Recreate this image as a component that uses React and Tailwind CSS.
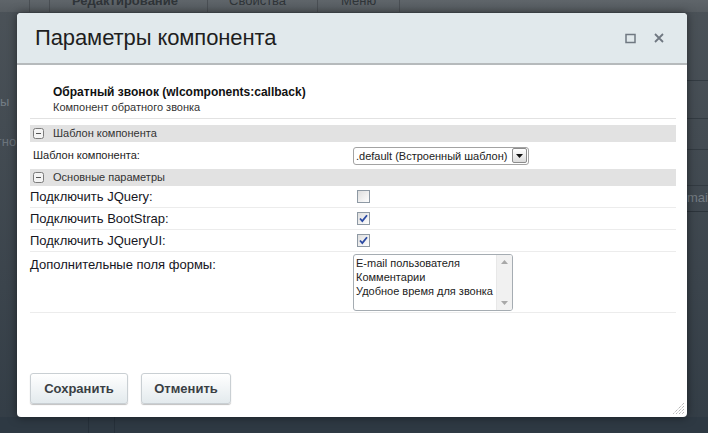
import React from "react";

const font = { fontFamily: '"Liberation Sans", Arial, sans-serif' };

function MinusBox() {
  return (
    <svg width="11" height="11" viewBox="0 0 11 11" className="shrink-0">
      <rect x="0.5" y="0.5" width="10" height="10" rx="2" fill="#f4f4f4" stroke="#7c7c7c" />
      <line x1="3" y1="5.5" x2="8" y2="5.5" stroke="#555" strokeWidth="1" />
    </svg>
  );
}

function Check({ checked }) {
  return (
    <svg width="13" height="13" viewBox="0 0 13 13" className="shrink-0">
      <defs>
        <linearGradient id="cbg" x1="0" y1="0" x2="1" y2="1">
          <stop offset="0" stopColor="#dcdcdc" />
          <stop offset="1" stopColor="#ffffff" />
        </linearGradient>
      </defs>
      <rect x="0.5" y="0.5" width="12" height="12" fill="url(#cbg)" stroke="#8e99a4" />
      {checked && (
        <path d="M3 6.5 L5.3 9 L10 3.2" fill="none" stroke="#2b4aa3" strokeWidth="1.8" />
      )}
    </svg>
  );
}

function Row({ label, children }) {
  return (
    <div className="h-[22px] flex items-center border-b border-[#ececec]">
      <div className="w-[327px] text-[13px] text-[#16161e] leading-[15px]">{label}</div>
      {children}
    </div>
  );
}

function Band({ children }) {
  return (
    <div className="h-[17px] bg-[#e2e2e2] flex items-center pl-[3px]">
      <MinusBox />
      <span className="ml-[9px] text-[11px] text-[#333] leading-[13px]">{children}</span>
    </div>
  );
}

export default function App() {
  return (
    <div
      className="relative w-[708px] h-[433px] overflow-hidden bg-gradient-to-b from-[#4b5258] to-[#333d46]"
      style={font}
    >
      {/* background page */}
      <div className="h-[12px] bg-gradient-to-b from-[#5f656a] to-[#565c61] flex text-[13px] font-bold text-[#2f3438] leading-[14px] overflow-hidden">
        <div className="w-[30px] border-r border-[#4a4f54]" />
        <div className="w-[20px] border-r border-[#4a4f54]" />
        <div className="w-[158px] border-r border-[#4a4f54] pl-[22px] -mt-[6px]">Редактирование</div>
        <div className="w-[110px] border-r border-[#4a4f54] pl-[21px] -mt-[6px] font-normal">Свойства</div>
        <div className="w-[82px] border-r border-[#4a4f54] pl-[23px] -mt-[6px] font-normal">Меню</div>
      </div>
      <div className="absolute left-0 top-[92px] text-[13px] text-[#747d85]">ы</div>
      <div className="absolute left-[-3px] top-[132px] text-[13px] text-[#6b747c]">гно</div>
      <div className="absolute right-0 top-[80px] w-[22px] flex flex-col">
        <div className="h-[38px] border-t border-[#333b42]" />
        <div className="h-[31px] border-t border-[#333b42]" />
        <div className="h-[36px] border-t border-[#333b42]" />
        <div className="h-[26px] border-t border-[#333b42] text-[13px] text-[#737b82] leading-[24px] pl-[1px]">mair</div>
        <div className="h-[25px] border-t border-[#2c343b]" />
      </div>
      <div className="absolute left-0 right-0 bottom-0 h-[16px] bg-[#2e3943] flex">
        <div className="w-[89px] border-r border-[#26303a]" />
        <div className="w-[26px] border-r border-[#26303a]" />
      </div>

      {/* dialog */}
      <div className="absolute left-[17px] top-[13px] w-[670px] h-[404px] bg-white rounded-[4px] shadow-[0_0_10px_rgba(0,0,0,0.5)] flex flex-col">
        <div className="h-[52px] bg-[#e1e9ec] border-b-2 border-[#b6babc] rounded-t-[4px] flex items-center pl-[18px] pr-[23px]">
          <div className="text-[22px] text-[#1e1e1e] leading-[26px] flex-1 -mt-[1px] tracking-[-0.1px]">Параметры компонента</div>
          <svg width="11" height="11" viewBox="0 0 11 11" className="mr-[18px]">
            <rect x="1" y="1.5" width="9" height="8" fill="none" stroke="#6f7881" strokeWidth="1.5" />
          </svg>
          <svg width="10" height="10" viewBox="0 0 10 10">
            <path d="M1 1 L9 9 M9 1 L1 9" stroke="#6f7881" strokeWidth="1.8" />
          </svg>
        </div>

        <div className="flex-1 flex flex-col pl-[13px] pr-[11px]">
          <div className="pl-[23px] pt-[20px] pb-[3px] border-b border-[#e2e2e2] leading-[15px]">
            <div className="font-bold text-[12px] text-[#111]">Обратный звонок (wlcomponents:callback)</div>
            <div className="text-[11px] text-[#333]">Компонент обратного звонка</div>
          </div>

          <div className="mt-[6px]">
            <Band>Шаблон компонента</Band>
          </div>
          <div className="h-[27px] flex items-center">
            <div className="w-[323px] pl-[3px] text-[11px] text-[#222]">Шаблон компонента:</div>
            <div className="w-[176px] h-[18px] border border-[#a3a3a3] rounded-[3px] flex items-center bg-white">
              <span className="flex-1 text-[11px] text-[#222] pl-[2px] leading-[14px] whitespace-nowrap">.default (Встроенный шаблон)</span>
              <div className="w-[15px] h-[15px] mr-[1px] border border-[#8c8c8c] rounded-[2px] bg-gradient-to-b from-[#ffffff] to-[#dcdcdc] flex items-center justify-center">
                <svg width="7" height="4" viewBox="0 0 7 4">
                  <path d="M0 0 L7 0 L3.5 4 Z" fill="#111" />
                </svg>
              </div>
            </div>
          </div>
          <Band>Основные параметры</Band>

          <Row label="Подключить JQuery:">
            <Check checked={false} />
          </Row>
          <Row label="Подключить BootStrap:">
            <Check checked />
          </Row>
          <Row label="Подключить JQueryUI:">
            <Check checked />
          </Row>
          <div className="flex pt-[2px] pb-[1px] border-b border-[#ececec]">
            <div className="w-[323px] text-[13px] text-[#16161e] leading-[15px] pt-[3px]">Дополнительные поля формы:</div>
            <div className="w-[160px] h-[57px] border border-[#a5acb2] rounded-[3px] flex overflow-hidden bg-white">
              <div className="flex-1 pl-[2px] pt-[1px] text-[11px] text-[#222] leading-[14px] whitespace-nowrap">
                <div>E-mail пользователя</div>
                <div>Комментарии</div>
                <div>Удобное время для звонка</div>
              </div>
              <div className="w-[16px] bg-[#f1f1f1] border-l border-[#e8e8e8] flex flex-col justify-between items-center py-[5px]">
                <svg width="7" height="4" viewBox="0 0 7 4"><path d="M0 4 L7 4 L3.5 0 Z" fill="#a8a8a8" /></svg>
                <svg width="7" height="4" viewBox="0 0 7 4"><path d="M0 0 L7 0 L3.5 4 Z" fill="#a8a8a8" /></svg>
              </div>
            </div>
          </div>

          <div className="flex-1" />
          <div className="flex gap-[13px] pb-[13px]">
            <button className="w-[98px] h-[31px] rounded-[3px] border border-[#c9cfd3] bg-gradient-to-b from-[#ffffff] to-[#e3eaed] shadow-[0_1px_1px_rgba(0,0,0,0.25)] text-[13px] font-bold text-[#3a3f44]">
              Сохранить
            </button>
            <button className="w-[90px] h-[31px] rounded-[3px] border border-[#c9cfd3] bg-gradient-to-b from-[#ffffff] to-[#e3eaed] shadow-[0_1px_1px_rgba(0,0,0,0.25)] text-[13px] font-bold text-[#3a3f44]">
              Отменить
            </button>
          </div>
        </div>

        {/* resize grip */}
        <svg width="13" height="13" viewBox="0 0 13 13" className="absolute right-[2px] bottom-[2px]">
          <path d="M12 1 L1 12 M12 4 L4 12 M12 7 L7 12 M12 10 L10 12" stroke="#9a9a9a" strokeWidth="1" strokeDasharray="1 1" />
        </svg>
      </div>
    </div>
  );
}
